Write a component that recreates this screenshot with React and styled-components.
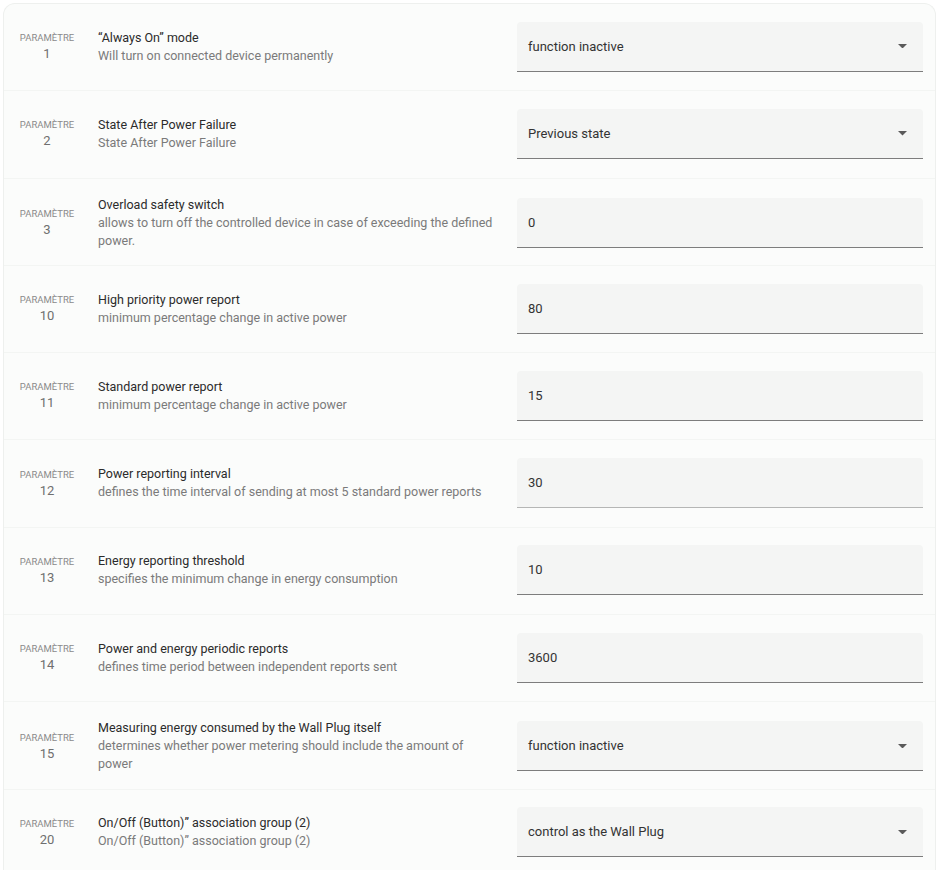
import React from 'react';
import styled, { createGlobalStyle } from 'styled-components';

const params = [
  { id: 1, title: '“Always On” mode', desc: 'Will turn on connected device permanently', value: 'function inactive', select: true },
  { id: 2, title: 'State After Power Failure', desc: 'State After Power Failure', value: 'Previous state', select: true },
  { id: 3, title: 'Overload safety switch', desc: 'allows to turn off the controlled device in case of exceeding the defined power.', value: '0' },
  { id: 10, title: 'High priority power report', desc: 'minimum percentage change in active power', value: '80' },
  { id: 11, title: 'Standard power report', desc: 'minimum percentage change in active power', value: '15' },
  { id: 12, title: 'Power reporting interval', desc: 'defines the time interval of sending at most 5 standard power reports', value: '30', faint: true },
  { id: 13, title: 'Energy reporting threshold', desc: 'specifies the minimum change in energy consumption', value: '10' },
  { id: 14, title: 'Power and energy periodic reports', desc: 'defines time period between independent reports sent', value: '3600' },
  { id: 15, title: 'Measuring energy consumed by the Wall Plug itself', desc: 'determines whether power metering should include the amount of power', value: 'function inactive', select: true },
  { id: 20, title: 'On/Off (Button)” association group (2)', desc: 'On/Off (Button)” association group (2)', value: 'control as the Wall Plug', select: true },
];

const App = () => (
  <>
    <GlobalStyle />
    <Page>
      <Card>
        {params.map((p) => (
          <Row key={p.id}>
            <ParamLabel>
              <ParamCaption>Paramètre</ParamCaption>
              <ParamNumber>{p.id}</ParamNumber>
            </ParamLabel>
            <Info>
              <Title>{p.title}</Title>
              <Description>{p.desc}</Description>
            </Info>
            <Field $faint={p.faint}>
              <FieldValue>{p.value}</FieldValue>
              {p.select && (
                <Arrow viewBox="0 0 10 5">
                  <path d="M0 0 L10 0 L5 5 Z" />
                </Arrow>
              )}
            </Field>
          </Row>
        ))}
      </Card>
    </Page>
  </>
);

export default App;

const GlobalStyle = createGlobalStyle`
  body {
    margin: 0;
    background: #ffffff;
    font-family: Roboto, "Noto Sans", sans-serif;
  }
`;

const Page = styled.div`
  padding: 3px 4px 0 3px;
  height: 867px;
  overflow: hidden;
`;

const Card = styled.div`
  background: #fbfcfb;
  border: 1px solid #eef0ee;
  border-bottom: none;
  border-radius: 12px 12px 0 0;
  overflow: hidden;
`;

const Row = styled.div`
  display: grid;
  grid-template-columns: 86px 1fr 406px;
  column-gap: 8px;
  align-items: center;
  padding: 17px 12px 18px 0;
  border-bottom: 1px solid #f3f5f3;
  height: 51.3px;
  box-sizing: content-box;
`;

const ParamLabel = styled.div`
  display: flex;
  flex-direction: column;
  align-items: center;
  text-align: center;
`;

const ParamCaption = styled.div`
  font-size: 9.5px;
  text-transform: uppercase;
  color: #8a8a8a;
  line-height: 14px;
`;

const ParamNumber = styled.div`
  font-size: 13px;
  color: #6f6f6f;
  line-height: 17px;
`;

const Info = styled.div`
  padding-right: 12px;
  display: flex;
  flex-direction: column;
`;

const Title = styled.div`
  font-size: 12.5px;
  color: #2b2b2b;
  line-height: 18px;
`;

const Description = styled.div`
  font-size: 12.5px;
  color: #7a7a7a;
  line-height: 18px;
`;

const Field = styled.div`
  display: flex;
  align-items: center;
  justify-content: space-between;
  height: 50px;
  box-sizing: border-box;
  padding: 0 16px 0 11px;
  background: #f4f5f4;
  border-radius: 4px 4px 0 0;
  border-bottom: 1px solid ${(p) => (p.$faint ? '#b5b6b5' : '#7d7d7d')};
`;

const FieldValue = styled.span`
  font-size: 13px;
  color: #333333;
`;

const Arrow = styled.svg`
  width: 9px;
  height: 4.5px;
  fill: #5a5a5a;
`;
